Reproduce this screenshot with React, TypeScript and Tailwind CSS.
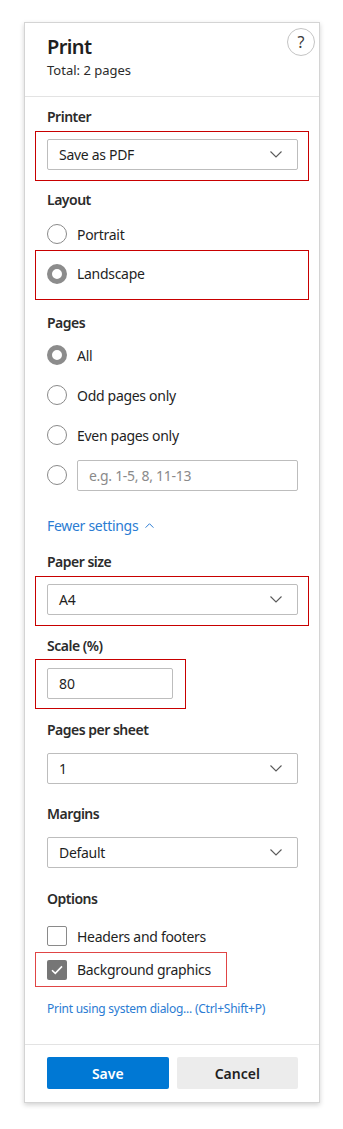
import type { ReactNode } from 'react';

const font = { fontFamily: '"Segoe UI", "Noto Sans", sans-serif' };

function Chevron({ up = false, small = false }: { up?: boolean; small?: boolean }) {
  const w = small ? 9 : 12;
  const h = small ? 5 : 7;
  return (
    <svg width={w} height={h} viewBox="0 0 12 7" className={up ? 'rotate-180' : ''}>
      <path d="M0.5 0.5 L6 6 L11.5 0.5" fill="none" stroke="currentColor" strokeWidth={small ? 1.4 : 1.1} />
    </svg>
  );
}

function Label({ children, className = '' }: { children: ReactNode; className?: string }) {
  return (
    <div className={`text-[14px] leading-[20px] font-semibold tracking-[-0.5px] text-[#2b2b2b] ${className}`}>{children}</div>
  );
}

function Select({ value }: { value: string }) {
  return (
    <div className="h-[31px] flex items-center justify-between border border-[#bdbdbd] rounded-[2px] pl-[11px] pr-[15px] text-[14px] tracking-[-0.3px] text-[#1f1f1f]">
      <span>{value}</span>
      <span className="text-[#5a5a5a]"><Chevron /></span>
    </div>
  );
}

function Radio({ checked = false }: { checked?: boolean }) {
  return checked ? (
    <span className="w-[20px] h-[20px] rounded-full border-[5px] border-[#8c8c8c] bg-white shrink-0" />
  ) : (
    <span className="w-[20px] h-[20px] rounded-full border border-[#8a8a8a] bg-white shrink-0" />
  );
}

function RadioRow({ label, checked = false }: { label: string; checked?: boolean }) {
  return (
    <div className="h-[40px] flex items-center gap-[10px] text-[14px] tracking-[-0.3px] text-[#1f1f1f]">
      <Radio checked={checked} />
      <span>{label}</span>
    </div>
  );
}

function Check({ checked = false }: { checked?: boolean }) {
  return checked ? (
    <span className="w-[20px] h-[20px] rounded-[2px] bg-[#767676] flex items-center justify-center shrink-0">
      <svg width="12" height="10" viewBox="0 0 12 10">
        <path d="M1 5.2 L4.3 8.4 L11 1.4" fill="none" stroke="#fff" strokeWidth="1.6" />
      </svg>
    </span>
  ) : (
    <span className="w-[20px] h-[20px] rounded-[2px] border border-[#8a8a8a] bg-white shrink-0" />
  );
}

export default function App() {
  return (
    <div className="min-h-[1129px] bg-white pt-[22px] pl-[24px]" style={font}>
      <div className="w-[296px] h-[1081px] flex flex-col bg-white border border-[#d4d4d4] shadow-[0_2px_5px_rgba(0,0,0,0.18)]">
        {/* header */}
        <div className="relative h-[74px] shrink-0 border-b border-[#e3e3e3] pl-[22px] pt-[10px]">
          <div className="text-[20px] leading-[28px] font-semibold tracking-[-0.6px] text-[#1f1f1f]">Print</div>
          <div className="text-[13px] leading-[18px] text-[#2b2b2b]">Total: 2 pages</div>
          <button className="absolute right-[4px] top-[5px] w-[28px] h-[28px] rounded-full border border-[#c4c4c4] flex items-center justify-center text-[16px] text-[#3a3a3a]">
            ?
          </button>
        </div>

        {/* settings */}
        <div className="flex-1 pl-[22px] pr-[21px] pt-[10px]">
          <Label>Printer</Label>
          <div className="-ml-[12px] -mr-[11px] mt-[4px] border border-[#c80000] pl-[11px] pr-[10px] pt-[7px] pb-[10px]">
            <Select value="Save as PDF" />
          </div>

          <Label className="mt-[9px]">Layout</Label>
          <div className="mt-[8px] h-[32px] flex items-center gap-[10px] text-[14px] tracking-[-0.3px] text-[#1f1f1f]">
            <Radio />
            <span>Portrait</span>
          </div>
          <div className="-ml-[12px] -mr-[11px] border border-[#c80000] pl-[11px] pt-[12px] pb-[15px] flex items-center gap-[10px] text-[14px] tracking-[-0.3px] text-[#1f1f1f]">
            <Radio checked />
            <span>Landscape</span>
          </div>

          <Label className="mt-[13px]">Pages</Label>
          <div className="mt-[2px]">
            <RadioRow label="All" checked />
            <RadioRow label="Odd pages only" />
            <RadioRow label="Even pages only" />
            <div className="h-[40px] flex items-center gap-[10px]">
              <Radio />
              <div className="flex-1 h-[31px] border border-[#bdbdbd] rounded-[2px] pl-[11px] flex items-center text-[14px] tracking-[-0.3px] text-[#8a8a8a]">
                e.g. 1-5, 8, 11-13
              </div>
            </div>
          </div>

          <div className="mt-[20px] h-[20px] flex items-center gap-[7px] text-[14px] tracking-[-0.3px] text-[#2b7cd3]">
            <span>Fewer settings</span>
            <span className="flex items-center"><Chevron up small /></span>
          </div>

          <Label className="mt-[17px]">Paper size</Label>
          <div className="-ml-[12px] -mr-[11px] mt-[4px] border border-[#c80000] pl-[11px] pr-[10px] pt-[7px] pb-[10px]">
            <Select value="A4" />
          </div>

          <Label className="mt-[10px]">Scale (%)</Label>
          <div className="-ml-[12px] w-[151px] mt-[3px] border border-[#c80000] pl-[11px] pr-[12px] pt-[8px] pb-[9px]">
            <div className="h-[31px] border border-[#bdbdbd] rounded-[2px] pl-[11px] flex items-center text-[14px] text-[#1f1f1f]">80</div>
          </div>

          <Label className="mt-[11px]">Pages per sheet</Label>
          <div className="mt-[13px]">
            <Select value="1" />
          </div>

          <Label className="mt-[20px]">Margins</Label>
          <div className="mt-[13px]">
            <Select value="Default" />
          </div>

          <Label className="mt-[21px]">Options</Label>
          <div className="mt-[11px] h-[32px] flex items-center gap-[10px] text-[14px] tracking-[-0.3px] text-[#1f1f1f]">
            <Check />
            <span>Headers and footers</span>
          </div>
          <div className="-ml-[12px] w-[192px] h-[35px] border border-[#e04545] pl-[11px] flex items-center gap-[10px] text-[14px] tracking-[-0.3px] text-[#1f1f1f]">
            <Check checked />
            <span>Background graphics</span>
          </div>

          <div className="mt-[14px] text-[12px] leading-[16px] tracking-[-0.25px] text-[#2b7cd3]">
            Print using system dialog... (Ctrl+Shift+P)
          </div>
        </div>

        {/* footer */}
        <div className="shrink-0 border-t border-[#e3e3e3] pl-[22px] pr-[21px] pt-[12px] pb-[13px] flex gap-[8px]">
          <button className="flex-1 h-[32px] rounded-[2px] bg-[#0078d4] text-white text-[14px] font-semibold">Save</button>
          <button className="flex-1 h-[32px] rounded-[2px] bg-[#ececec] text-[#1f1f1f] text-[14px] font-semibold">Cancel</button>
        </div>
      </div>
    </div>
  );
}
